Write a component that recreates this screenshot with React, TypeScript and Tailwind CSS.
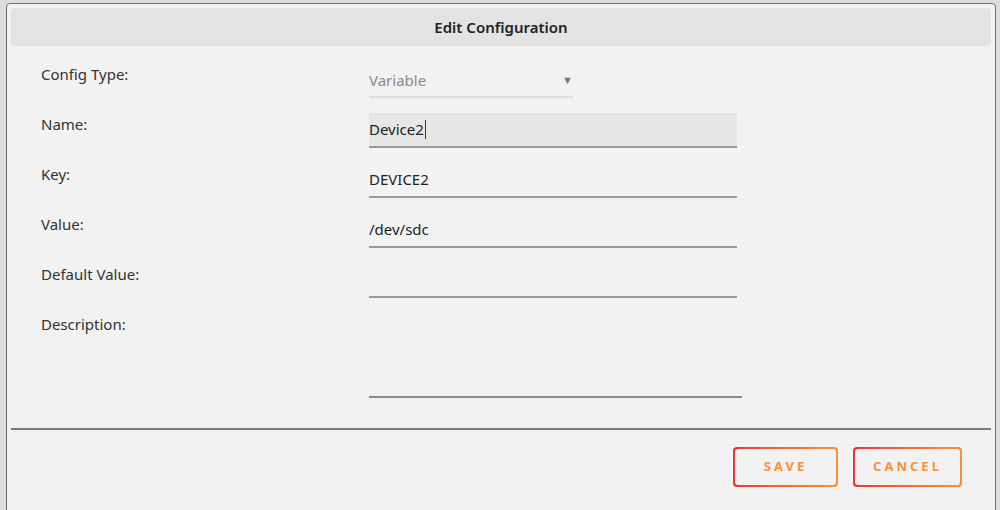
const font = { fontFamily: '"Noto Sans", "Open Sans", sans-serif' }

function Row({ label, children, h = 'h-[50px]' }: { label: string; children: React.ReactNode; h?: string }) {
  return (
    <div className={`flex ${h}`}>
      <div className="w-[328px] shrink-0 pt-[1px] text-[15px] leading-[21px] text-[#333]">{label}</div>
      {children}
    </div>
  )
}

function TextField({ value, active }: { value?: string; active?: boolean }) {
  return (
    <div
      className={`flex h-[35px] w-[368px] items-center border-b-2 border-[#9a9a9a] text-[15px] text-[#222] ${
        active ? 'bg-[#e6e6e6]' : ''
      }`}
    >
      {value}
      {active && <span className="ml-[1px] inline-block h-[19px] w-[1px] bg-[#333]" />}
    </div>
  )
}

function GradientButton({ label, width }: { label: string; width: string }) {
  return (
    <div className={`rounded-[4px] bg-gradient-to-r from-[#e8323a] to-[#ff9130] p-[2px] ${width}`}>
      <div className="flex h-[36px] items-center justify-center rounded-[3px] bg-[#f2f2f2] text-[13px] font-bold tracking-[3px] text-[#f7913d]">
        {label}
      </div>
    </div>
  )
}

export default function App() {
  return (
    <div className="h-[510px] w-[1000px] overflow-hidden bg-[#dcdcdc] pt-[3px] pl-[6px] pr-[4px]" style={font}>
      <div className="h-[540px] rounded-[4px] border border-[#6f6f6f] bg-[#f2f2f2] p-[4px]">
        <div className="flex h-[38px] items-center justify-center rounded-[4px] bg-[#e3e3e3] text-[15px] font-semibold text-[#222]">
          Edit Configuration
        </div>

        <div className="pt-[17px] pl-[30px]">
          <Row label="Config Type:">
            <div className="flex h-[35px] w-[204px] items-center justify-between border-b-2 border-[#dedede] pt-[2px] text-[15px] text-[#8a8a8a]">
              <span>Variable</span>
              <span className="text-[11px] text-[#777]">▼</span>
            </div>
          </Row>
          <Row label="Name:">
            <TextField value="Device2" active />
          </Row>
          <Row label="Key:">
            <TextField value="DEVICE2" />
          </Row>
          <Row label="Value:">
            <TextField value="/dev/sdc" />
          </Row>
          <Row label="Default Value:">
            <TextField />
          </Row>
          <Row label="Description:" h="h-[85px]">
            <div className="h-[85px] w-[373px] border-b-2 border-[#8a8a8a]" />
          </Row>
        </div>

        <div className="mt-[30px] h-[2px] bg-[#7a7a7a]" />

        <div className="flex justify-end gap-[15px] pt-[17px] pr-[29px]">
          <GradientButton label="SAVE" width="w-[105px]" />
          <GradientButton label="CANCEL" width="w-[109px]" />
        </div>
      </div>
    </div>
  )
}
